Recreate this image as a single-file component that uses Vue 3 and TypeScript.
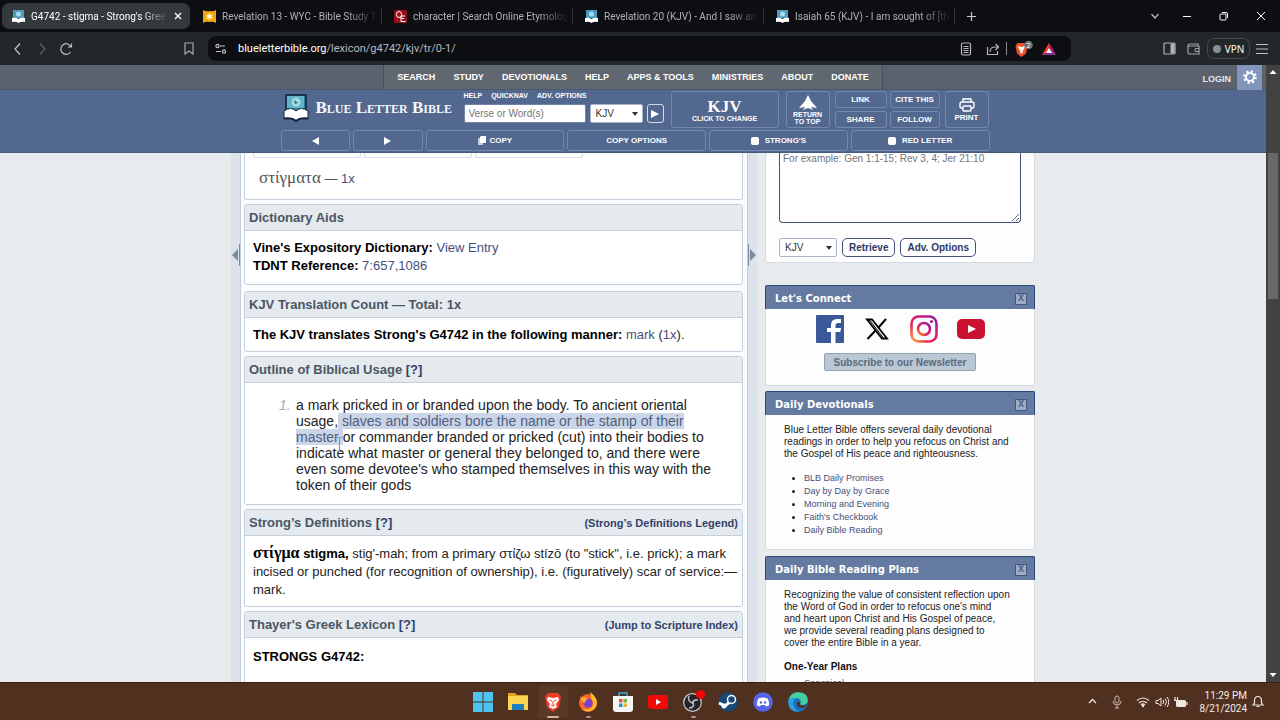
<script setup lang="ts">
interface Tab { title: string; icon: 'blb' | 'star' | 'oe' }

const tabs: Tab[] = [
  { title: "G4742 - stigma - Strong's Gree", icon: 'blb' },
  { title: 'Revelation 13 - WYC - Bible Study To', icon: 'star' },
  { title: 'character | Search Online Etymology', icon: 'oe' },
  { title: 'Revelation 20 (KJV) - And I saw an a', icon: 'blb' },
  { title: 'Isaiah 65 (KJV) - I am sought of [the', icon: 'blb' },
]
const menu: string[] = ['SEARCH', 'STUDY', 'DEVOTIONALS', 'HELP', 'APPS & TOOLS', 'MINISTRIES', 'ABOUT', 'DONATE']
const devotionals: string[] = ['BLB Daily Promises', 'Day by Day by Grace', 'Morning and Evening', "Faith's Checkbook", 'Daily Bible Reading']
</script>

<template>
  <div class="screen">
    <div class="tabstrip">
      <div v-for="(t, i) in tabs" :key="t.title" class="tab" :class="{ active: i === 0 }">
        <svg v-if="t.icon === 'blb'" class="fav" viewBox="0 0 13 13"><rect x="1" y="0" width="11" height="8" fill="#4c9dbd" /><circle cx="6.500" cy="4" r="2.500" fill="#a5dbe8" /><path d="M0 8q4-1 6.500 1Q9 7 13 8v4q-4-1-6.500 1Q4 11 0 12z" fill="#fff" /></svg>
        <svg v-else-if="t.icon === 'star'" class="fav" viewBox="0 0 13 13"><path d="M0 0q3 2 6.500 1Q10 2 13 0v13q-3-2-6.500-1Q3 11 0 13z" fill="#f2a712" /><path d="M6.500 2.500l1 2.500 2.500-.5L8.500 6.500 10 9 7.500 8l-1 2.500-1-2.500L3 9l1.500-2.500L3 4.500l2.500.5z" fill="#fff6d0" /></svg>
        <svg v-else class="fav" viewBox="0 0 13 13"><rect width="13" height="13" rx="1" fill="#960f1b" /><ellipse cx="5" cy="4.500" rx="2.600" ry="3" fill="none" stroke="#fff" /><path d="M11 6H7v5.500h4.500M7 8.500h3" fill="none" stroke="#fff" /></svg>
        <span class="tabtitle">{{ t.title }}</span>
        <button v-if="i === 0" class="bare" aria-label="Close tab"><svg width="8" height="8" viewBox="0 0 8 8"><path d="M1 1l6 6M7 1L1 7" stroke="#fff" stroke-width="1.400" /></svg></button>
      </div>
      <button class="bare newtab" aria-label="New tab"><svg width="9" height="9" viewBox="0 0 9 9"><path d="M4.500 0v9M0 4.500h9" stroke="#c8cacc" stroke-width="1.200" /></svg></button>
      <div class="winbtns">
        <button class="bare" aria-label="Search tabs"><svg width="10" height="10" viewBox="0 0 10 10"><path d="M1.500 3L5 7l3.500-4" fill="none" stroke="#b8babc" stroke-width="1.300" /></svg></button>
        <button class="bare" aria-label="Minimize"><svg width="10" height="10" viewBox="0 0 10 10"><path d="M1 5.500h8" stroke="#fff" /></svg></button>
        <button class="bare" aria-label="Restore"><svg width="10" height="10" viewBox="0 0 10 10"><rect x="1" y="3" width="6" height="6" rx="1" fill="none" stroke="#fff" /><path d="M3 1.500h4Q8.500 1.500 8.500 3v4" fill="none" stroke="#fff" /></svg></button>
        <button class="bare" aria-label="Close"><svg width="10" height="10" viewBox="0 0 10 10"><path d="M1 1l8 8M9 1L1 9" stroke="#fff" /></svg></button>
      </div>
    </div>

    <div class="toolbar">
      <div class="navbtns">
        <button class="bare" aria-label="Back"><svg width="14" height="14" viewBox="0 0 14 14"><path d="M9 1.500L4 7l5 5.500" fill="none" stroke="#c0c2c4" stroke-width="1.200" /></svg></button>
        <button class="bare" aria-label="Forward"><svg width="14" height="14" viewBox="0 0 14 14"><path d="M5 1.500L10 7l-5 5.500" fill="none" stroke="#5d6164" stroke-width="1.200" /></svg></button>
        <button class="bare" aria-label="Reload"><svg width="14" height="14" viewBox="0 0 14 14"><path d="M11.500 10A5.300 5.300 0 1 1 12 5M12.500 1.500V5H9" fill="none" stroke="#c0c2c4" stroke-width="1.200" /></svg></button>
      </div>
      <button class="bare bookmark" aria-label="Bookmark"><svg width="10" height="13" viewBox="0 0 10 13"><path d="M1 1h8v11L5 9l-4 3z" fill="none" stroke="#a8aaac" stroke-width="1.200" /></svg></button>
      <div class="address">
        <svg width="12" height="12" viewBox="0 0 12 12"><g fill="none" stroke="#c2c4c6" stroke-width="1.200"><circle cx="2.500" cy="3" r="1.600" /><path d="M5 3h5M1 8.500h5" /><circle cx="9" cy="8.500" r="1.600" /></g></svg>
        <span class="url"><b>blueletterbible.org</b>/lexicon/g4742/kjv/tr/0-1/</span>
        <button class="bare" aria-label="Reader"><svg width="12" height="14" viewBox="0 0 12 14"><rect x="1.500" y="1" width="9" height="12" rx="1.500" fill="none" stroke="#b5b7b9" stroke-width="1.200" /><path d="M3.500 4.500h5M3.500 6.500h5M3.500 8.500h5M3.500 10.500h5" stroke="#b5b7b9" /></svg></button>
        <button class="bare share" aria-label="Share"><svg width="14" height="14" viewBox="0 0 14 14"><path d="M1.500 5v7.500h10V9M4 10q0-5 5-5h3M9.500 2l3 3-3 3" fill="none" stroke="#b5b7b9" stroke-width="1.200" /></svg></button>
        <span class="bar"></span>
        <button class="bare shield" aria-label="Brave Shields"><svg width="20" height="18" viewBox="0 0 20 18"><path d="M3.500 3h8l2 3-1.500 7.500L7.500 17 3 13.500 1.500 6z" fill="#f0512b" /><path d="M4 6l3.500 1L11 6l-1 3-1.500 2L9 12.500 7.500 13.500 6 12.500l.5-1.500L5 9z" fill="#fff" /><circle cx="14.500" cy="5" r="4.300" fill="#707477" /><text x="14.500" y="7.500" font-size="7" text-anchor="middle" fill="#fff">2</text></svg></button>
        <button class="bare bat" aria-label="Rewards"><svg width="16" height="14" viewBox="0 0 16 14"><path d="M8 1L1 13h14z" fill="#7b2e9e" /><path d="M8 1L1 13l4-2 3-5z" fill="#f13b24" /><path d="M8 1l7 12-4-2-3-5z" fill="#b51f71" /><path d="M8 6l-3 5h6z" fill="#fff" /></svg></button>
      </div>
      <div class="right">
        <button class="bare" aria-label="Sidebar"><svg width="13" height="13" viewBox="0 0 13 13"><rect x="1" y="1" width="11" height="11" rx="1" fill="none" stroke="#b2b4b6" stroke-width="1.200" /><rect x="7.500" y="1.500" width="4" height="10" fill="#b2b4b6" /></svg></button>
        <button class="bare" aria-label="Wallet"><svg width="13" height="13" viewBox="0 0 13 13"><path d="M11 4V2H3Q1 2 1 3.500T3 4h9v8H3q-2 0-2-2V3M12 6.500H9q-1 0-1 1.500t1 1.500h3" fill="none" stroke="#a0a2a4" stroke-width="1.200" /></svg></button>
        <button class="vpn"><i></i>VPN</button>
        <button class="bare" aria-label="Menu"><svg width="12" height="12" viewBox="0 0 12 12"><path d="M0 1.500h12M0 6h12M0 10.500h12" stroke="#c0c2c4" /></svg></button>
      </div>
    </div>

    <div class="viewport">
      <div class="page">
        <nav class="menubar">
          <span class="side"></span>
          <div class="menu"><a v-for="m in menu" :key="m" href="#">{{ m }}</a></div>
          <div class="side account">
            <a href="#">LOGIN</a>
            <button class="gear" aria-label="Settings"><svg width="14" height="14" viewBox="0 0 14 14"><circle cx="7" cy="7" r="5.500" fill="none" stroke="#fff" stroke-width="2.600" stroke-dasharray="2.160" /><circle cx="7" cy="7" r="3.900" fill="none" stroke="#fff" stroke-width="1.800" /></svg></button>
          </div>
        </nav>

        <header class="header">
          <div class="tools">
            <a class="brand" href="#">
              <svg width="28" height="28" viewBox="0 0 28 28"><rect x="4" y="1" width="20" height="17" fill="#2d7c9e" stroke="#0e2638" stroke-width="1.500" /><rect x="5" y="2" width="17" height="12" fill="#62b2c8" /><circle cx="14" cy="8" r="4.500" fill="#a0dbe3" /><path d="M12 6l4 3-3 1z" fill="#2b6680" /><path d="M2 17q7-5 12 0 5-5 12 0v8q-8-2-12 2-4-4-12-2z" fill="#fff" stroke="#182a3d" /><path d="M2 24.500q8-1 12 2.500 4-3.500 12-2.500" fill="none" stroke="#13253c" stroke-width="2" /></svg>
              <span>Blue Letter Bible</span>
            </a>
            <form class="search" @submit.prevent>
              <div class="links"><a href="#">HELP</a><a href="#">QUICKNAV</a><a href="#">ADV. OPTIONS</a></div>
              <div class="fields">
                <input type="text" placeholder="Verse or Word(s)" aria-label="Verse or words" />
                <span class="pick"><select aria-label="Version"><option>KJV</option></select></span>
                <button class="go" aria-label="Go"><svg width="8" height="8" viewBox="0 0 8 8"><path d="M0 0l8 4-8 4z" fill="#fff" /></svg></button>
              </div>
            </form>
            <button class="hb version"><strong>KJV</strong>CLICK TO CHANGE</button>
            <button class="hb top"><svg width="20" height="16" viewBox="0 0 20 16"><path d="M10 0l3 6 6 7-6-1 2 3-5-2-5 2 2-3-6 1 6-7z" fill="#fff" /></svg><span>RETURN<br />TO TOP</span></button>
            <div class="quad">
              <button class="hb">LINK</button><button class="hb">CITE THIS</button>
              <button class="hb">SHARE</button><button class="hb">FOLLOW</button>
            </div>
            <button class="hb print"><svg width="16" height="14" viewBox="0 0 16 14"><g fill="none" stroke="#fff" stroke-width="1.400"><path d="M4 4V1h8v3M4 10H2Q1 10 1 8V6q0-2 2-2h10q2 0 2 2v2q0 2-1 2h-2" /><rect x="4" y="8" width="8" height="5" rx="1" /></g></svg>PRINT</button>
          </div>
          <div class="actions">
            <div class="pair">
              <button class="hb" aria-label="Previous"><svg width="7" height="8" viewBox="0 0 7 8"><path d="M7 0L0 4l7 4z" fill="#fff" /></svg></button>
              <button class="hb" aria-label="Next"><svg width="7" height="8" viewBox="0 0 7 8"><path d="M0 0l7 4-7 4z" fill="#fff" /></svg></button>
            </div>
            <button class="hb"><svg width="8" height="9" viewBox="0 0 8 9"><path d="M0 2h5v7H0z" fill="#c3cee0" /><path d="M3 0h5v7H2V1z" fill="#fff" /></svg>COPY</button>
            <button class="hb">COPY OPTIONS</button>
            <label class="hb"><input type="checkbox" />STRONG'S</label>
            <label class="hb"><input type="checkbox" />RED LETTER</label>
          </div>
        </header>

        <div class="content">
          <button class="handle left" aria-label="Collapse left"><svg width="8" height="22" viewBox="0 0 8 22"><path d="M6 5v12L0 11zM7 0h1v22H7z" fill="#7b89a0" /></svg></button>
          <main class="main">
            <section class="card first">
              <div class="stubs"><span></span><span></span><span></span></div>
              <p class="form"><span class="greek">στίγματα</span> — <a href="#">1x</a></p>
            </section>
            <section class="card aids">
              <h2>Dictionary Aids</h2>
              <div class="body"><b>Vine's Expository Dictionary:</b> <a href="#">View Entry</a><br /><b>TDNT Reference:</b> <a href="#">7:657,1086</a></div>
            </section>
            <section class="card count">
              <h2>KJV Translation Count — Total: 1x</h2>
              <div class="body"><b>The KJV translates Strong's G4742 in the following manner:</b> <a href="#">mark</a> (<a href="#">1x</a>).</div>
            </section>
            <section class="card outline">
              <h2><span>Outline of Biblical Usage <a href="#">[?]</a></span></h2>
              <ol>
                <li>a mark pricked in or branded upon the body. To ancient oriental<br />usage,<mark> slaves and soldiers bore the name or the stamp of their</mark><br /><mark>{{ 'master ' }}<svg class="ibeam" width="5" height="15" viewBox="0 0 5 15"><path d="M0 .5h2l.5.5.5-.5h2M2.500 1v13M0 14.500h2l.5-.5.5.5h2" fill="none" stroke="#8b8f99" /></svg></mark>or commander branded or pricked (cut) into their bodies to<br />indicate what master or general they belonged to, and there were<br />even some devotee's who stamped themselves in this way with the<br />token of their gods</li>
              </ol>
            </section>
            <section class="card strongs">
              <h2><span>Strong’s Definitions <a href="#">[?]</a></span><a class="aside" href="#">(Strong’s Definitions Legend)</a></h2>
              <div class="body"><b><span class="greek">στίγμα</span> stigma,</b> stig'-mah; from a primary στίζω stízō (to "stick", i.e. prick); a mark<br />incised or punched (for recognition of ownership), i.e. (figuratively) scar of service:—<br />mark.</div>
            </section>
            <section class="card thayer">
              <h2><span>Thayer's Greek Lexicon <a href="#">[?]</a></span><a class="aside" href="#">(Jump to Scripture Index)</a></h2>
              <div class="body"><b>STRONGS G4742:</b></div>
            </section>
          </main>
          <button class="handle" aria-label="Collapse right"><svg width="8" height="22" viewBox="0 0 8 22"><path d="M2 5v12l6-6zM0 0h1v22H0z" fill="#7b89a0" /></svg></button>

          <aside class="sidebar">
            <section class="widget lookup">
              <textarea aria-label="Verses" placeholder="For example: Gen 1:1-15; Rev 3, 4; Jer 21:10"></textarea>
              <div class="row"><span class="pick"><select aria-label="Bible version"><option>KJV</option></select></span><button>Retrieve</button><button>Adv. Options</button></div>
            </section>
            <section class="widget connect">
              <h3>Let's Connect<button class="x" aria-label="Close">X</button></h3>
              <div class="social">
                <a href="#" aria-label="Facebook"><svg width="28" height="28" viewBox="0 0 28 28"><rect width="28" height="28" rx="1" fill="#3b5998" /><path d="M15 28V17h-4v-4h4v-3q0-6 6-6h4v4h-3q-2.500 0-2.500 2.500V13H25l-.7 4h-4.800v11z" fill="#fff" /></svg></a>
                <a href="#" aria-label="X"><svg width="28" height="28" viewBox="0 0 28 28"><path d="M4 4.500h5L24 23.500h-5z" fill="#fff" stroke="#000" stroke-width="1.800" /><path d="M4.500 24l8-8.500M15.500 12.500L23 4" stroke="#000" stroke-width="2" /><path d="M6.500 5l14 18" stroke="#000" stroke-width="1" /></svg></a>
                <a href="#" aria-label="Instagram"><svg width="28" height="28" viewBox="0 0 28 28"><defs><linearGradient id="ig" x1="0" y1="1" x2="1" y2="0"><stop offset="0" stop-color="#fbb03b" /><stop offset=".3" stop-color="#ee2a4b" /><stop offset=".65" stop-color="#d3197c" /><stop offset="1" stop-color="#7b25ad" /></linearGradient></defs><rect x="1.500" y="1.500" width="25" height="25" rx="7" fill="none" stroke="url(#ig)" stroke-width="2.600" /><circle cx="14" cy="14" r="6" fill="none" stroke="url(#ig)" stroke-width="2.600" /><circle cx="21.500" cy="6.500" r="1.600" fill="#a31b91" /></svg></a>
                <a href="#" aria-label="YouTube"><svg width="28" height="28" viewBox="0 0 28 28"><rect y="4" width="28" height="20" rx="5" fill="#cc1232" /><path d="M11 10l8 4-8 4z" fill="#fff" /></svg></a>
              </div>
              <button class="subscribe">Subscribe to our Newsletter</button>
            </section>
            <section class="widget devos">
              <h3>Daily Devotionals<button class="x" aria-label="Close">X</button></h3>
              <p>Blue Letter Bible offers several daily devotional<br />readings in order to help you refocus on Christ and<br />the Gospel of His peace and righteousness.</p>
              <ul><li v-for="d in devotionals" :key="d"><a href="#">{{ d }}</a></li></ul>
            </section>
            <section class="widget plans">
              <h3>Daily Bible Reading Plans<button class="x" aria-label="Close">X</button></h3>
              <p>Recognizing the value of consistent reflection upon<br />the Word of God in order to refocus one's mind<br />and heart upon Christ and His Gospel of peace,<br />we provide several reading plans designed to<br />cover the entire Bible in a year.</p>
              <h4>One-Year Plans</h4>
              <ul><li><a href="#">Canonical</a></li></ul>
            </section>
          </aside>
        </div>
      </div>
      <div class="scrollbar">
        <svg width="8" height="5" viewBox="0 0 8 5"><path d="M4 0l3.500 4h-7z" fill="#fff" /></svg>
        <span class="thumb"></span>
        <svg width="8" height="5" viewBox="0 0 8 5"><path d="M4 5L.5 1h7z" fill="#fff" /></svg>
      </div>
    </div>

    <footer class="taskbar">
      <span></span>
      <div class="apps">
        <button aria-label="Start"><svg viewBox="0 0 20 20"><path d="M0 0h9.500v9.500H0zM10.500 0H20v9.500h-9.500zM0 10.500h9.500V20H0zM10.500 10.500H20V20h-9.500z" fill="#4fc3f0" /></svg></button>
        <button aria-label="Files"><svg viewBox="0 0 20 20"><path d="M0 1h7l2 2h11v15H0z" fill="#dfa520" /><rect y="4" width="20" height="14" fill="#fcd450" /><path d="M4 18v-6h12v6z" fill="#1c7fc0" /></svg></button>
        <button class="current" aria-label="Brave"><svg viewBox="0 0 20 20"><path d="M5 1h10l3 4-2 10-6 5-6-5L2 5z" fill="#ef3b26" /><path d="M5 5l5 1 5-1 1 3-3 4 1 3-4 2-4-2 1-3-3-4z" fill="#fff" /><path d="M6.500 8l2.500 1M13.500 8L11 9M10 9v4M8 13l2 1 2-1" stroke="#ef3b26" fill="none" /></svg></button>
        <button class="open" aria-label="Firefox"><svg viewBox="0 0 20 20"><circle cx="10" cy="11" r="9" fill="#f7632a" /><path d="M12 0q7 5 7 11a9 9 0 0 1-15 6q12 2 11-7-2-4-3-10z" fill="#fdb92e" /><circle cx="10" cy="11" r="4.500" fill="#7b3ed0" /><path d="M2 4l2 2q3-2 6 1-3 1-3 4-4-1-5-7z" fill="#ffae34" /></svg></button>
        <button aria-label="Store"><svg viewBox="0 0 20 20"><path d="M6 5V1h8v4" fill="none" stroke="#3ca6de" stroke-width="1.500" /><path d="M0 4h20v13q0 3-3 3H3q-3 0-3-3z" fill="#f3f5f6" /><path d="M6 7h3.500v3.500H6z" fill="#e35435" /><path d="M10.500 7H14v3.500h-3.500z" fill="#75b43b" /><path d="M6 11.500h3.500V15H6z" fill="#2f95d0" /><path d="M10.500 11.500H14V15h-3.500z" fill="#f0b52c" /></svg></button>
        <button aria-label="YouTube app"><svg viewBox="0 0 20 20"><rect x="0" y="3" width="20" height="14" rx="3" fill="#f20a0a" /><path d="M8 7l5 3-5 3z" fill="#fff" /></svg></button>
        <button class="open" aria-label="OBS"><svg viewBox="0 0 20 20"><circle cx="9.500" cy="10.500" r="8.800" fill="#262328" stroke="#d0cbc8" stroke-width="1.200" /><g fill="none" stroke="#bdb9b7" stroke-width="1.600"><path d="M6 4q-2 5 3.500 7M15 8q-5-1-6 4M6 16q6 0 4-6" /></g></svg><i class="rec"></i></button>
        <button aria-label="Steam"><svg viewBox="0 0 20 20"><circle cx="10" cy="10" r="9.500" fill="#174a78" /><path d="M1 11l6 3 6-5" fill="none" stroke="#fff" stroke-width="3" /><circle cx="13.500" cy="7.500" r="4" fill="#174a78" stroke="#fff" stroke-width="1.500" /><circle cx="6" cy="14" r="2.500" fill="#fff" /></svg></button>
        <button aria-label="Discord"><svg viewBox="0 0 20 20"><circle cx="10" cy="10" r="9.800" fill="#5865e8" /><path d="M5.500 6.500q4.500-2 9 0 2 3 1.500 7l-3 1-1-1.500H8L7 14.500l-3-1q-.5-4 1.500-7z" fill="#fff" /><circle cx="8" cy="10.500" r="1.200" fill="#5865e8" /><circle cx="12" cy="10.500" r="1.200" fill="#5865e8" /></svg></button>
        <button aria-label="Edge"><svg viewBox="0 0 20 20"><circle cx="10" cy="10" r="9.800" fill="#1670bd" /><path d="M.3 9Q2 0 10.500.2 20 1 19.800 8q0 5-6 5-3 0-1-3 0-4-5-4-5 0-7.500 3z" fill="#44cfa0" /><path d="M.3 9Q3 5 8 6q-4 3-2 8t6 5.500Q0 21 .3 9z" fill="#2a9de0" /><path d="M12.500 10q-2 4 4 3.500l2.500-1q-2 4-6 3.500-5-1-4-6z" fill="#53301d" /></svg></button>
      </div>
      <div class="tray">
        <button class="bare" aria-label="Hidden icons"><svg width="9" height="9" viewBox="0 0 9 9"><path d="M1 6l3.500-3.500L8 6" fill="none" stroke="#f0e8e0" stroke-width="1.300" /></svg></button>
        <button class="bare mic" aria-label="Microphone"><svg width="10" height="14" viewBox="0 0 10 14"><rect x="3" y="1" width="4" height="7" rx="2" fill="none" stroke="#c9b8aa" /><path d="M1 6q0 4 4 4t4-4M5 10v3M3 13h4" fill="none" stroke="#c9b8aa" /></svg></button>
        <button class="bare net" aria-label="Network and sound">
          <svg width="14" height="12" viewBox="0 0 14 12"><path d="M1 4.500q6-5 12 0M3 7q4-3.500 8 0M5 9q2-2 4 0" fill="none" stroke="#f0e8e0" stroke-width="1.200" /><circle cx="7" cy="10" r="1.200" fill="#f0e8e0" /></svg>
          <svg width="14" height="12" viewBox="0 0 14 12"><path d="M1 4.500h2L6 2v8L3 7.500H1zM8 4q1.500 2 0 4M10 2.500q3 3.500 0 7M12 1q3.500 5 0 10" fill="none" stroke="#f0e8e0" /></svg>
          <svg width="14" height="12" viewBox="0 0 14 12"><rect x="2" y="4" width="10" height="7" rx="1.500" fill="#f0e8e0" /><path d="M13 6v3M1 1v4M3.500 1v4M0 4.500h5" stroke="#f0e8e0" stroke-width="1.200" /></svg>
        </button>
        <div class="clock">11:29 PM<br />8/21/2024</div>
        <button class="bare" aria-label="Notifications"><svg width="12" height="13" viewBox="0 0 12 13"><path d="M1 10l1.500-2V5Q3 1.500 6 1.500T9.500 5v3L11 10zM4.500 11.500h3" fill="none" stroke="#f0e8e0" stroke-width="1.200" /></svg></button>
      </div>
    </footer>
  </div>
</template>

<style>
html, body { margin: 0; overflow: hidden; }
</style>

<style scoped>
* { box-sizing: border-box; }
.screen { height: 100vh; display: flex; flex-direction: column; font-family: "Liberation Sans", Arial, sans-serif; background: #e8ebee; }
button { font: inherit; color: inherit; cursor: pointer; padding: 0; }
a { color: #45507a; text-decoration: none; }
svg { flex: none; display: block; }
.bare { border: 0; background: none; display: flex; align-items: center; justify-content: center; flex: none; }

.tabstrip { height: 32px; flex: none; display: flex; align-items: center; background: #0c0e12; font: 10px Roboto, "Open Sans", sans-serif; color: #b0b2b4; }
.tab { width: 191px; height: 26px; display: flex; align-items: center; gap: 6px; padding: 0 4px 0 12px; position: relative; }
.tab.active { background: #33393c; color: #fff; border-radius: 7px; width: 188px; margin: 0 1px 0 2px; padding: 0 8px 0 10px; }
.tab:not(.active)::after { content: ""; position: absolute; right: 0; top: 4px; height: 18px; width: 1px; background: #303336; }
.fav { width: 13px; height: 13px; }
.tabtitle { flex: 1; min-width: 0; white-space: nowrap; mask-image: linear-gradient(90deg, #000 80%, transparent); }
.newtab { width: 32px; }
.winbtns { margin-left: auto; display: flex; gap: 27px; padding-right: 14px; }
.winbtns button:first-child { margin-right: -5px; }

.toolbar { height: 33px; flex: none; display: flex; align-items: center; background: #22272a; color: #fff; font-family: "Noto Sans", "Open Sans", sans-serif; }
.navbtns { display: flex; gap: 10px; padding-left: 11px; width: 184px; }
.address { flex: 0 1 863px; height: 25px; margin-left: 14px; display: flex; align-items: center; background: #0c0e12; border-radius: 8px; padding: 0 14px 0 7px; }
.url { flex: 1; margin-left: 11px; font: 11px Roboto, sans-serif; color: #b9bbbd; white-space: nowrap; }
.url b { font-weight: 400; color: #fff; }
.share { margin-left: 14px; }
.bar { width: 1px; height: 13px; background: #888; margin: 0 7px 0 6px; }
.bat { margin-left: 7px; }
.right { margin-left: auto; display: flex; align-items: center; gap: 11px; padding-right: 12px; }
.vpn { border: 1px solid #45494c; background: none; border-radius: 7px; height: 21px; width: 43px; font-size: 10px; display: flex; align-items: center; justify-content: center; gap: 4px; margin-left: -4px; margin-right: -5px; }
.vpn i { width: 8px; height: 8px; border-radius: 50%; background: #8b8e90; }

.viewport { flex: 1; min-height: 0; display: flex; }
.page { flex: 1; min-width: 0; display: flex; flex-direction: column; }
.menubar { height: 25px; flex: none; display: flex; background: #5b626d; border-bottom: 1px solid #4c5870; font-size: 9px; font-weight: 700; }
.menubar a { color: #fff; }
.side { flex: 1; }
.menu { display: flex; align-items: center; gap: 18px; padding: 0 13px; border: solid #484f5b; border-width: 0 1px; background: #616771; }
.account { display: flex; justify-content: flex-end; align-items: center; gap: 6px; }
.account a { padding-top: 4px; color: #e4e6ea; }
.gear { width: 25px; height: 25px; border: 0; background: #8296bc; display: flex; align-items: center; justify-content: center; margin-right: 4px; }
.header { flex: none; height: 63px; background: #53688f; border-bottom: 1px solid #465a80; color: #fff; display: flex; flex-direction: column; align-items: center; gap: 2px; padding: 1px 0 0 4px; }
.tools { width: 709px; height: 37px; display: flex; }
.brand { display: flex; align-items: center; width: 183px; gap: 6px; padding: 0 0 3px 1px; color: #f4f7fb; font: 700 17px "Liberation Serif", serif; font-variant: small-caps; white-space: nowrap; }
.search { width: 200px; margin-right: 7px; }
.links { display: flex; gap: 9px; font-size: 7px; font-weight: 700; line-height: 10px; height: 13px; }
.links a { color: #fff; }
.fields { display: flex; gap: 4px; height: 19px; }
.fields input { width: 122px; border: 1px solid #7285a8; border-radius: 2px; font: 10px "Liberation Sans", sans-serif; padding: 0 4px; }
.pick { position: relative; display: flex; }
.pick::after { content: ""; position: absolute; right: 5px; top: 8px; border: 3px solid transparent; border-top: 4px solid #333; border-bottom: 0; }
.pick select { appearance: none; width: 53px; border: 1px solid #aab4c4; border-radius: 2px; background: #fff; font: 10px "Liberation Sans", sans-serif; padding: 0 5px; color: #333; }
.go { width: 18px; border: 1px solid #d5dbe6; border-radius: 3px; background: none; display: flex; align-items: center; justify-content: center; }
.hb { border: 1px solid #7488ad; border-radius: 3px; background: none; color: #fff; font-size: 8px; font-weight: 700; display: flex; align-items: center; justify-content: center; gap: 4px; white-space: nowrap; }
.version { width: 108px; flex-direction: column; gap: 0; font-size: 7px; margin-right: 7px; }
.version strong { font: 700 17px/17px "Liberation Serif", serif; }
.top { width: 44px; flex-direction: column; gap: 0; font-size: 7px; line-height: 7px; margin-right: 5px; }
.quad { display: grid; grid-template-columns: 52px 50px; gap: 3px; margin-right: 5px; }
.print { width: 44px; flex-direction: column; gap: 1px; }
.actions { width: 709px; height: 21px; display: grid; grid-template-columns: 142px repeat(4, 1fr); gap: 3px; }
.pair { display: grid; grid-template-columns: 1fr 1fr; gap: 3px; }
.actions input { appearance: none; width: 8px; height: 8px; margin: 0 2px 0 0; background: #fff; border-radius: 2px; }

.content { flex: 1; min-height: 0; overflow: hidden; display: flex; justify-content: center; background: #e7ebee; }
.handle { width: 9px; border: 0; background: #dce2e9; display: flex; padding-top: 91px; flex: none; align-items: flex-start; }
.handle.left { justify-content: flex-end; }
.main { width: 508px; flex: none; background: #fbfcfd; border: solid #c3ccd8; border-width: 0 1px; padding: 0 4px 0 3px; display: flex; flex-direction: column; gap: 4px; }
.card { flex: none; border: 1px solid #c3d0dc; border-radius: 3px; background: #fff; color: #222; }
.card b { color: #000; }
.card h2 { margin: 0; height: 26px; padding: 0 4px; display: flex; align-items: center; justify-content: space-between; background: #e4eaed; border-bottom: 1px solid #c3d0dc; font-size: 13px; font-weight: 700; color: #4b5665; white-space: nowrap; }
.card h2 a { color: #35426b; }
.card h2 .aside { font-size: 11px; }
.body { padding: 8px 8px 0; font-size: 13px; line-height: 18px; white-space: nowrap; }
.first { border-top: 0; height: 47px; border-radius: 0 0 3px 3px; }
.stubs { display: flex; gap: 3px; padding-left: 8px; }
.stubs span { width: 108px; height: 5px; border: 1px solid #d5dde5; border-top: 0; border-radius: 0 0 3px 3px; }
.form { margin: 11px 14px 0; font-size: 13px; line-height: 20px; color: #555; }
.greek { font-family: "Liberation Serif", serif; font-size: 17px; line-height: 1; }
.aids { height: 81px; margin-bottom: 2px; }
.count { height: 61px; }
.outline { height: 149px; }
.outline ol { margin: 0; padding: 14px 0 0 51px; font-size: 14px; line-height: 16px; white-space: nowrap; }
.outline li { position: relative; list-style: none; }
.outline li::before { content: "1."; position: absolute; left: -17px; color: #aaa; font-style: italic; }
mark { background: #cbd5e8; color: #50607f; position: relative; white-space: pre; }
.ibeam { position: absolute; right: 1px; top: 8px; }
.strongs { height: 98px; }
.strongs .body { padding-top: 9px; }
.strongs .greek { font-size: 16px; }
.thayer { height: 120px; }
.thayer .body { padding-top: 10px; }

.sidebar { width: 270px; flex: none; margin-left: 8px; font-size: 10px; }
.widget { background: #fdfdfe; border: 1px solid #d5dbe2; border-radius: 3px; margin-bottom: 6px; }
.lookup { height: 110px; border-top: 0; margin-bottom: 22px; padding: 0 13px; }
.lookup textarea { display: block; width: 242px; height: 70px; border: 1px solid #46507c; border-top: 0; border-radius: 0 0 4px 4px; padding: 0 3px; font: 10px "Liberation Sans", sans-serif; background: #fff; }
.row { display: flex; gap: 5px; margin-top: 15px; height: 19px; }
.row .pick select { width: 58px; }
.row button { border: 1px solid #46507c; background: #fff; border-radius: 5px; color: #2e3865; font-size: 10px; font-weight: 700; padding: 0 6px; white-space: nowrap; }
.widget h3 { margin: -1px -1px 0; height: 24px; padding: 2px 7px 0 9px; display: flex; align-items: center; justify-content: space-between; background: #647aa0; border: 1px solid #2b487c; border-bottom: 0; border-radius: 2px 2px 0 0; color: #fff; font: 700 10px "DejaVu Sans", sans-serif; white-space: nowrap; }
.x { width: 12px; height: 12px; background: #9dabc4; border: 1px solid #42567f; color: #53658a; font-size: 8px; line-height: 8px; }
.connect { height: 101px; margin-bottom: 5px; }
.social { display: flex; justify-content: center; gap: 19px; padding: 6px 0 10px; }
.subscribe { display: block; margin: 0 auto; width: 152px; height: 18px; border: 1px solid #93a3b2; background: #bac8d5; border-radius: 2px; color: #5a6a80; font-size: 10px; font-weight: 700; white-space: nowrap; }
.devos { height: 159px; }
.widget p { margin: 9px 18px 0; font-size: 10px; line-height: 12px; color: #222; white-space: nowrap; }
.widget ul { margin: 12px 0 0; padding-left: 38px; font-size: 9px; line-height: 13px; color: #222; }
.plans { height: 200px; }
.widget h4 { margin: 12px 18px 0; font-size: 10px; line-height: 12px; color: #111; }
.plans ul { margin-top: 4px; }

.scrollbar { width: 14px; flex: none; background: #424242; display: flex; flex-direction: column; align-items: center; padding: 5px 0; }
.thumb { width: 10px; height: 146px; background: #686868; margin: 78px 0 auto; }

.taskbar { height: 38px; flex: none; display: grid; grid-template-columns: minmax(0, 1fr) auto minmax(0, 1fr); align-items: center; background: #50301f; border-top: 1px solid #3c1e14; color: #f4ece4; }
.apps { display: flex; gap: 15px; }
.apps button { position: relative; width: 20px; height: 20px; border: 0; background: none; }
.apps svg { width: 20px; height: 20px; position: relative; }
.apps .open::after, .apps .current::after { content: ""; position: absolute; left: 8px; bottom: -6px; width: 5px; height: 2px; border-radius: 1px; background: #a8968a; }
.apps .current::after { left: 4px; width: 12px; background: #d6b594; }
.apps .current::before { content: ""; position: absolute; left: -5px; top: -6px; width: 30px; height: 32px; background: #593a29; border-radius: 3px; }
.rec { position: absolute; right: -2px; top: -2px; width: 9px; height: 9px; border-radius: 50%; background: #f00808; }
.tray { display: flex; align-items: center; justify-content: flex-end; padding-right: 16px; }
.mic { margin: 0 14px 0 15px; }
.net { gap: 5px; }
.clock { margin: 0 5px 0 11px; text-align: right; font: 10px/13px Roboto, sans-serif; white-space: nowrap; }
</style>
